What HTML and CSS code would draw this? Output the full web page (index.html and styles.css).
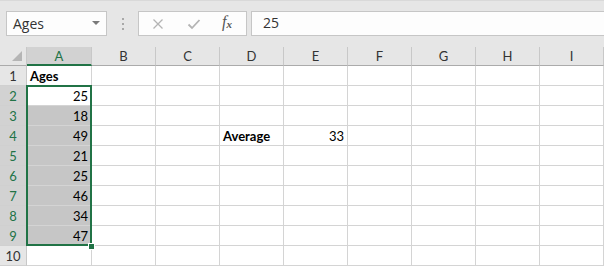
FILE: index.html
```html
<!DOCTYPE html>
<html>
<head>
<meta charset="utf-8">
<link rel="stylesheet" href="styles.css">
</head>
<body>
<div class="toolbar">
  <div class="namebox">
    <span class="nb-text">Ages</span>
    <svg class="nb-arrow" width="8" height="4" viewBox="0 0 8 4"><polygon points="0,0 8,0 4,4" fill="#7a7a7a"/></svg>
  </div>
  <div class="dots"><i></i><i></i><i></i></div>
  <div class="fbuttons">
    <svg class="btn" width="12" height="12" viewBox="0 0 12 12"><path d="M1.5 1.5 L10.5 10.5 M10.5 1.5 L1.5 10.5" stroke="#b4b4b4" stroke-width="1.3" fill="none"/></svg>
    <svg class="btn" width="14" height="12" viewBox="0 0 14 12"><path d="M1.5 6.5 L5 10 L12.5 2" stroke="#b4b4b4" stroke-width="1.8" fill="none"/></svg>
    <span class="fx">f<sub>x</sub></span>
  </div>
  <div class="formula">25</div>
</div>
<div class="sheet">
  <div class="corner"><svg width="10" height="10" viewBox="0 0 10 10"><polygon points="10,0 10,10 0,10" fill="#b5b5b5"/></svg></div>
  <div class="ch chsel">A</div><div class="ch">B</div><div class="ch">C</div><div class="ch">D</div><div class="ch">E</div><div class="ch">F</div><div class="ch">G</div><div class="ch">H</div><div class="ch">I</div>

  <div class="rh">1</div><div class="c b">Ages</div><div class="c"></div><div class="c"></div><div class="c"></div><div class="c"></div><div class="c"></div><div class="c"></div><div class="c"></div><div class="c"></div>
  <div class="rh rhsel">2</div><div class="c r">25</div><div class="c"></div><div class="c"></div><div class="c"></div><div class="c"></div><div class="c"></div><div class="c"></div><div class="c"></div><div class="c"></div>
  <div class="rh rhsel">3</div><div class="c r sel">18</div><div class="c"></div><div class="c"></div><div class="c"></div><div class="c"></div><div class="c"></div><div class="c"></div><div class="c"></div><div class="c"></div>
  <div class="rh rhsel">4</div><div class="c r sel">49</div><div class="c"></div><div class="c"></div><div class="c b">Average</div><div class="c r">33</div><div class="c"></div><div class="c"></div><div class="c"></div><div class="c"></div>
  <div class="rh rhsel">5</div><div class="c r sel">21</div><div class="c"></div><div class="c"></div><div class="c"></div><div class="c"></div><div class="c"></div><div class="c"></div><div class="c"></div><div class="c"></div>
  <div class="rh rhsel">6</div><div class="c r sel">25</div><div class="c"></div><div class="c"></div><div class="c"></div><div class="c"></div><div class="c"></div><div class="c"></div><div class="c"></div><div class="c"></div>
  <div class="rh rhsel">7</div><div class="c r sel">46</div><div class="c"></div><div class="c"></div><div class="c"></div><div class="c"></div><div class="c"></div><div class="c"></div><div class="c"></div><div class="c"></div>
  <div class="rh rhsel">8</div><div class="c r sel">34</div><div class="c"></div><div class="c"></div><div class="c"></div><div class="c"></div><div class="c"></div><div class="c"></div><div class="c"></div><div class="c"></div>
  <div class="rh rhsel">9</div><div class="c r sel">47</div><div class="c"></div><div class="c"></div><div class="c"></div><div class="c"></div><div class="c"></div><div class="c"></div><div class="c"></div><div class="c"></div>
  <div class="rh">10</div><div class="c"></div><div class="c"></div><div class="c"></div><div class="c"></div><div class="c"></div><div class="c"></div><div class="c"></div><div class="c"></div><div class="c"></div>

  <div class="selbox"></div>
  <div class="handle"></div>
</div>
</body>
</html>
```
FILE: styles.css
```css
* { box-sizing: border-box; }
html, body {
  margin: 0;
  padding: 0;
  width: 604px;
  height: 267px;
  overflow: hidden;
  background: #ffffff;
}
body {
  font-family: Lato, "Liberation Sans", sans-serif;
  color: #000;
}

.toolbar {
  height: 47px;
  background: #e6e6e6;
  border-top: 1px solid #d9d9d9;
  display: flex;
  align-items: flex-start;
  padding: 10px 0 0 6px;
}
.namebox {
  width: 101px;
  height: 25px;
  background: #fdfdfd;
  border: 1px solid #c6c6c6;
  display: flex;
  align-items: center;
  justify-content: space-between;
  padding: 0 6px 0 6px;
  font-family: "Open Sans", "Noto Sans", sans-serif;
  font-size: 14px;
  color: #333;
}
.nb-text { margin-top: -1px; }
.nb-arrow { margin-top: -1px; }
.dots {
  width: 31px;
  height: 25px;
  display: flex;
  flex-direction: column;
  align-items: center;
  justify-content: center;
  gap: 3px;
}
.dots i {
  display: block;
  width: 2px;
  height: 2px;
  background: #a8a8a8;
}
.fbuttons {
  width: 109px;
  height: 25px;
  background: #fdfdfd;
  border: 1px solid #c6c6c6;
  display: flex;
  align-items: center;
  padding-left: 13px;
}
.fbuttons .btn:first-child { margin-right: 23px; }
.fbuttons .btn:nth-child(2) { margin-right: 21px; }
.fx {
  font-family: "Liberation Serif", serif;
  font-style: italic;
  font-size: 16px;
  color: #555;
  margin-top: -3px;
}
.fx sub {
  font-size: 11px;
  font-weight: bold;
  vertical-align: baseline;
  position: relative;
  top: 1px;
}
.formula {
  margin-left: 4px;
  width: 353px;
  height: 25px;
  background: #fdfdfd;
  border: 1px solid #c6c6c6;
  border-right: none;
  padding-left: 11px;
  font-family: "Open Sans", "Noto Sans", sans-serif;
  font-size: 14px;
  line-height: 22px;
  color: #333;
}

.sheet {
  position: relative;
  display: grid;
  grid-template-columns: 27px 65px repeat(8, 64px);
  grid-template-rows: 19px repeat(10, 20px);
  font-size: 13px;
}
.corner {
  background: #e6e6e6;
  border-right: 1px solid #c8c8c8;
  border-bottom: 1px solid #ababab;
  display: flex;
  align-items: flex-end;
  justify-content: flex-end;
  padding: 0 4px 4px 0;
}
.corner svg { display: block; }
.ch {
  background: #e6e6e6;
  border-right: 1px solid #c8c8c8;
  border-bottom: 1px solid #ababab;
  text-align: center;
  line-height: 18px;
  color: #333;
}
.chsel {
  background: #d2d2d2;
  border-bottom: 2px solid #217346;
  color: #217346;
}
.rh {
  background: #e6e6e6;
  border-right: 1px solid #c8c8c8;
  border-bottom: 1px solid #d0d0d0;
  text-align: center;
  line-height: 20px;
  color: #333;
}
.rhsel {
  background: #d2d2d2;
  color: #217346;
}
.c {
  border-right: 1px solid #d4d4d4;
  border-bottom: 1px solid #d4d4d4;
  padding: 0 3px;
  line-height: 20px;
  white-space: nowrap;
  color: #000;
}
.c.b { font-weight: bold; }
.c.r { text-align: right; }
.c.sel { background: #c6c6c6; }

.selbox {
  position: absolute;
  left: 26px;
  top: 38px;
  width: 66px;
  height: 161px;
  border: 2px solid #217346;
  pointer-events: none;
}
.handle {
  position: absolute;
  left: 88px;
  top: 196px;
  width: 7px;
  height: 7px;
  background: #217346;
  border: 1px solid #ffffff;
}
```
